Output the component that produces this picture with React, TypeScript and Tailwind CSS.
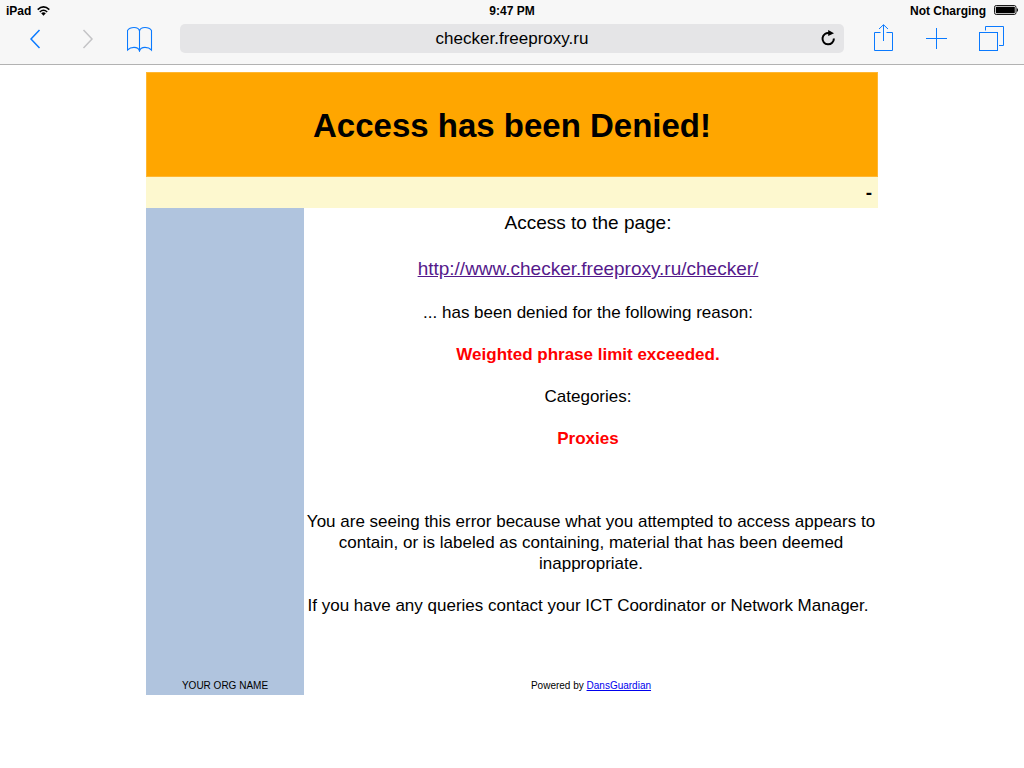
import type { ReactNode } from 'react';

const BLUE = '#0a7aff';

export default function App() {
  return (
    <div className="min-h-screen bg-white text-black font-['Liberation_Sans',Arial,sans-serif]">
      <header className="border-b border-[#b2b2b2] bg-[#f7f7f7]">
        <StatusBar />
        <Toolbar />
      </header>
      <DeniedPage />
    </div>
  );
}

function StatusBar() {
  return (
    <div className="grid grid-cols-3 items-center h-[22px] px-1.5 text-[12px] leading-[22px] font-bold">
      <div className="flex items-center gap-1.5">
        <span>iPad</span>
        <WifiIcon />
      </div>
      <time className="text-center">9:47 PM</time>
      <div className="flex items-center justify-end gap-2">
        <span>Not Charging</span>
        <BatteryIcon />
      </div>
    </div>
  );
}

function Toolbar() {
  return (
    <div className="flex items-start h-[42px] pt-0.5 pl-2.5 pr-1.5">
      <nav className="flex shrink-0" aria-label="History">
        <ToolButton label="Back">
          <svg width="12" height="20" viewBox="0 0 12 20" fill="none" stroke={BLUE} strokeWidth="1.5">
            <path d="M9.5 1 L1 10 L9.5 19" />
          </svg>
        </ToolButton>
        <ToolButton label="Forward" disabled>
          <svg width="12" height="20" viewBox="0 0 12 20" fill="none" stroke="#c4c4c6" strokeWidth="1.5">
            <path d="M1.5 1 L10 10 L1.5 19" />
          </svg>
        </ToolButton>
        <ToolButton label="Bookmarks">
          <svg width="26" height="26" viewBox="0 0 26 26" fill="none" stroke={BLUE} strokeWidth="1.1">
            <path d="M12.5 5 C12 2.4 9.8 1.5 7 1.5 C4 1.5 2 2.2 0.5 4.5 V24 C2.5 22 4.4 21.4 7 21.4 C9.8 21.4 11.8 22.4 12.5 25 C13.2 22.4 15.2 21.4 18 21.4 C20.6 21.4 22.6 22 24.5 24 V4.5 C23 2.2 21 1.5 18 1.5 C15.2 1.5 13 2.4 12.5 5 Z" />
            <path d="M12.5 4 V24.5" />
          </svg>
        </ToolButton>
      </nav>

      <form className="relative flex-1 min-w-0 ml-3.5 mr-3" onSubmit={(e) => e.preventDefault()}>
        <input
          type="text"
          aria-label="Address"
          defaultValue="checker.freeproxy.ru"
          className="block w-full h-[29px] rounded-[5px] bg-[#e5e5e7] px-8 text-center text-[17px] leading-[29px] outline-none"
        />
        <button type="button" aria-label="Reload" className="absolute right-2 top-1.5 h-4 w-4">
          <svg width="16" height="16" viewBox="0 0 16 16" fill="none">
            <path d="M13.9 8.6 A5.7 5.7 0 1 1 9.4 3.1" stroke="#000" strokeWidth="2" />
            <path d="M8.2 0 L14 3.2 L8.2 6 Z" fill="#000" />
          </svg>
        </button>
      </form>

      <nav className="flex shrink-0" aria-label="Actions">
        <ToolButton label="Share" wide>
          <svg width="20" height="30" viewBox="0 0 20 30" fill="none" stroke={BLUE} strokeWidth="1">
            <path d="M7.5 8.5 H1.5 V26.5 H19.5 V8.5 H13.5" />
            <path d="M10.5 17 V1 M6 5 L10.5 0.7 L15 5" />
          </svg>
        </ToolButton>
        <ToolButton label="New tab" wide>
          <svg width="22" height="22" viewBox="0 0 22 22" fill="none" stroke={BLUE} strokeWidth="1">
            <path d="M10.5 0 V21 M0 10.5 H21" />
          </svg>
        </ToolButton>
        <ToolButton label="Show tabs" wide>
          <svg width="26" height="26" viewBox="0 0 26 26" fill="none" stroke={BLUE} strokeWidth="1">
            <rect x="1.5" y="6.5" width="18" height="18" />
            <path d="M7.5 4.5 V0.5 H25.5 V19.5 H21" />
          </svg>
        </ToolButton>
      </nav>
    </div>
  );
}

interface ToolButtonProps {
  label: string;
  disabled?: boolean;
  wide?: boolean;
  children: ReactNode;
}

function ToolButton({ label, disabled, wide, children }: ToolButtonProps) {
  return (
    <button
      type="button"
      aria-label={label}
      disabled={disabled}
      className={`flex h-[30px] items-center justify-center ${wide ? 'w-[54px]' : 'w-[52px]'}`}
    >
      {children}
    </button>
  );
}

function DeniedPage() {
  return (
    <main className="mx-auto mt-[7px] w-full max-w-[732px]">
      <div className="flex h-[105px] items-center justify-center border border-[#ffb732] bg-[#ffa600] pt-0.5">
        <h1 className="text-[33px] leading-[40px] font-bold">Access has been Denied!</h1>
      </div>
      <div className="h-[31px] bg-[#fdf8cf] pr-1.5 text-right text-[19px] leading-[31px] font-bold">-</div>

      <div className="flex">
        <aside className="flex w-[158px] shrink-0 items-end justify-center bg-[#b0c4de] pb-0.5 text-[10px] leading-[15px]">
          YOUR ORG NAME
        </aside>

        <div className="flex-1 min-w-0 pt-[3px] pb-0.5 text-center text-[17px] leading-[21px]">
          <div className="flex flex-col gap-[23px] pr-1.5 text-[19px] leading-[23px]">
            <p>Access to the page:</p>
            <p>
              <a href="http://www.checker.freeproxy.ru/checker/" className="text-[#551a8b] underline">
                http://www.checker.freeproxy.ru/checker/
              </a>
            </p>
          </div>

          <div className="mt-[22px] flex flex-col gap-[21px] pr-1.5">
            <p>... has been denied for the following reason:</p>
            <p className="font-bold text-[#ff0000]">Weighted phrase limit exceeded.</p>
            <p>Categories:</p>
            <p className="font-bold text-[#ff0000]">Proxies</p>
          </div>

          <div className="mt-[62px] flex flex-col gap-[21px]">
            <p>
              You are seeing this error because what you attempted to access appears to contain, or is labeled as
              containing, material that has been deemed inappropriate.
            </p>
            <p className="pr-1.5">If you have any queries contact your ICT Coordinator or Network Manager.</p>
          </div>

          <p className="mt-[62px] text-[10px] leading-[15px]">
            Powered by{' '}
            <a href="http://dansguardian.org" className="text-[#0000ee] underline">
              DansGuardian
            </a>
          </p>
        </div>
      </div>
    </main>
  );
}

function WifiIcon() {
  return (
    <svg width="14" height="10" viewBox="0 0 14 10" fill="none" stroke="#000" strokeWidth="1.6">
      <path d="M0.7 3.7 Q6.5 -1.8 12.3 3.7" />
      <path d="M2.8 6 Q6.5 2.5 10.2 6" />
      <path d="M4.2 7.2 Q6.5 5.2 8.8 7.2 L6.5 9.8 Z" fill="#000" stroke="none" />
    </svg>
  );
}

function BatteryIcon() {
  return (
    <svg width="24" height="12" viewBox="0 0 24 12" fill="none">
      <rect x="0.5" y="0.5" width="21.5" height="9" rx="1.8" stroke="#000" strokeWidth="0.9" />
      <rect x="1.8" y="1.8" width="19" height="6.4" rx="0.8" fill="#000" />
      <path d="M22.8 3 Q24 3.5 24 5 Q24 6.5 22.8 7 Z" fill="#000" />
    </svg>
  );
}
